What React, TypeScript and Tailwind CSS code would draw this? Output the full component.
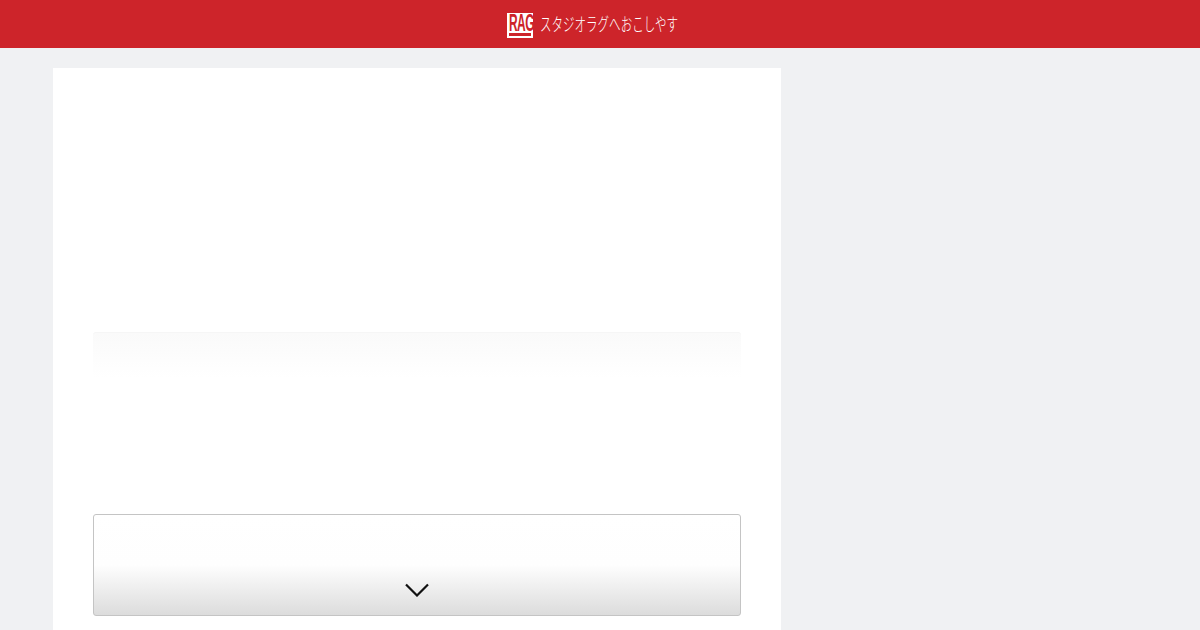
export default function App() {
  return (
    <div className="h-[630px] overflow-hidden bg-[#f0f1f3] font-['Liberation_Sans',sans-serif]">
      <header className="flex h-12 items-center justify-center bg-[#cd242a]">
        <div className="flex items-center gap-[7px] pr-[16px] pt-[2px]">
          <div className="flex h-[25px] w-[26px] flex-col items-start bg-white pl-[2px] pt-[1px]">
            <span className="origin-left scale-x-[0.52] text-[23px] leading-[18px] font-bold tracking-[-1px] whitespace-nowrap text-[#cd242a]">RAG</span>
            <div className="mt-[1px] h-[3px] w-[22px] bg-[#cd242a]" />
          </div>
          <div className="h-6 w-[137px]">
            <span className="inline-block origin-left scale-x-[0.64] text-[18px] leading-5 font-light whitespace-nowrap text-white font-['Noto_Sans_CJK_JP',sans-serif]">
              スタジオラグへおこしやす
            </span>
          </div>
        </div>
      </header>

      <main className="ml-[53px] mt-5 h-[600px] w-[728px] bg-white px-10 pt-[264px]">
        <div className="h-[46px] rounded-t-[3px] border-t border-[#f6f6f6] bg-gradient-to-b from-[#fafafa] to-white" />

        <button className="mt-[136px] flex h-[102px] w-full items-end justify-center rounded-[3px] border border-[#c4c4c4] bg-[linear-gradient(to_bottom,#ffffff_0%,#fefefe_50%,#dcdcdc_100%)] pb-[18px]">
          <svg width="24" height="14" viewBox="0 0 24 14" fill="none" stroke="#111" strokeWidth="2.2">
            <path d="M1 1.5 12 12.5 23 1.5" />
          </svg>
        </button>
      </main>
    </div>
  )
}
